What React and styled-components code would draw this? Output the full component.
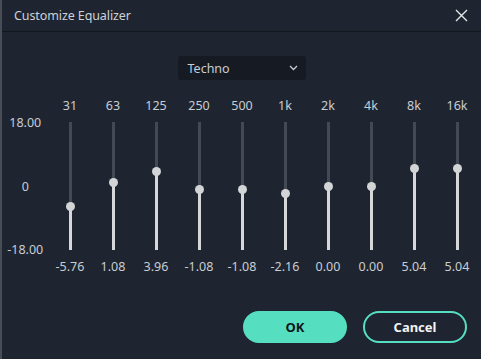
import styled, { createGlobalStyle } from "styled-components";

const GlobalStyle = createGlobalStyle`
  html, body {
    margin: 0;
    padding: 0;
    background: #1e2530;
  }
  * {
    box-sizing: border-box;
  }
`;

const Dialog = styled.div`
  width: 481px;
  height: 359px;
  background: #1e2530;
  border-left: 2px solid #484d55;
  border-top-right-radius: 4px;
  font-family: "Noto Sans", "Liberation Sans", sans-serif;
  color: #c9cdd3;
  display: flex;
  flex-direction: column;
`;

const Header = styled.div`
  height: 32px;
  flex: none;
  display: flex;
  align-items: center;
  justify-content: space-between;
  padding: 0 12px 0 12px;
  border-bottom: 1px solid #13171d;
`;

const Title = styled.div`
  font-size: 12.5px;
  color: #cdd1d6;
  letter-spacing: -0.1px;
`;

const CloseButton = styled.button`
  width: 16px;
  height: 16px;
  padding: 0;
  border: none;
  background: none;
  display: flex;
  align-items: center;
  justify-content: center;
  cursor: pointer;
`;

const PresetRow = styled.div`
  display: flex;
  justify-content: center;
  padding-top: 24px;
`;

const Select = styled.div`
  width: 128px;
  height: 24px;
  background: #161b23;
  border-radius: 3px;
  display: flex;
  align-items: center;
  justify-content: space-between;
  padding: 0 8px 0 10px;
  font-size: 12.5px;
  color: #c9cdd3;
`;

const Equalizer = styled.div`
  display: grid;
  grid-template-columns: 46.5px repeat(10, 43px);
  padding-top: 18px;
`;

const Scale = styled.div`
  display: flex;
  flex-direction: column;
  align-items: center;
  justify-content: space-between;
  padding-top: 17px;
  height: 160px;
  font-size: 12.5px;
`;

const ScaleLabel = styled.div`
  line-height: 16px;
  height: 16px;
`;

const Band = styled.div`
  display: flex;
  flex-direction: column;
  align-items: center;
  font-size: 12.5px;
`;

const BandLabel = styled.div`
  line-height: 16px;
  height: 16px;
`;

const Track = styled.div`
  position: relative;
  width: 3px;
  height: 128px;
  margin: 8px 0 9px;
  background: #434a54;
`;

const Fill = styled.div`
  position: absolute;
  left: 0;
  right: 0;
  bottom: 0;
  background: #d6d7d9;
`;

const Knob = styled.div`
  position: absolute;
  left: 50%;
  width: 9px;
  height: 9px;
  margin: -4.5px 0 0 -4.5px;
  border-radius: 50%;
  background: #d3d4d6;
`;

const Footer = styled.div`
  display: flex;
  justify-content: flex-end;
  gap: 16px;
  padding: 36px 14px 0 0;
`;

const Button = styled.button`
  width: 104px;
  height: 32px;
  border-radius: 16px;
  font-family: "Noto Sans", "Liberation Sans", sans-serif;
  font-size: 13px;
  font-weight: 700;
  cursor: pointer;
  border: 2px solid #55dfc0;
  background: ${(p) => (p.primary ? "#55dfc0" : "transparent")};
  color: ${(p) => (p.primary ? "#11161c" : "#f2f4f5")};
`;

const bands = [
  ["31", -5.76],
  ["63", 1.08],
  ["125", 3.96],
  ["250", -1.08],
  ["500", -1.08],
  ["1k", -2.16],
  ["2k", 0],
  ["4k", 0],
  ["8k", 5.04],
  ["16k", 5.04],
];

const App = () => {
  return (
    <>
      <GlobalStyle />
      <Dialog>
        <Header>
          <Title>Customize Equalizer</Title>
          <CloseButton>
            <svg width="13" height="13" viewBox="0 0 13 13">
              <path d="M1 1L12 12M12 1L1 12" stroke="#e4e6e9" strokeWidth="1.4" />
            </svg>
          </CloseButton>
        </Header>
        <PresetRow>
          <Select>
            <span>Techno</span>
            <svg width="9" height="6" viewBox="0 0 9 6">
              <path d="M1 1L4.5 4.5L8 1" stroke="#c9cdd3" strokeWidth="1.3" fill="none" />
            </svg>
          </Select>
        </PresetRow>
        <Equalizer>
          <Scale>
            <ScaleLabel>18.00</ScaleLabel>
            <ScaleLabel>0</ScaleLabel>
            <ScaleLabel>-18.00</ScaleLabel>
          </Scale>
          {bands.map(([freq, value]) => {
            const frac = (18 - value) / 36;
            return (
              <Band key={freq}>
                <BandLabel>{freq}</BandLabel>
                <Track>
                  <Fill style={{ top: `${frac * 100}%` }} />
                  <Knob style={{ top: `${frac * 100}%` }} />
                </Track>
                <BandLabel>{value.toFixed(2)}</BandLabel>
              </Band>
            );
          })}
        </Equalizer>
        <Footer>
          <Button primary>OK</Button>
          <Button>Cancel</Button>
        </Footer>
      </Dialog>
    </>
  );
};

export default App;
